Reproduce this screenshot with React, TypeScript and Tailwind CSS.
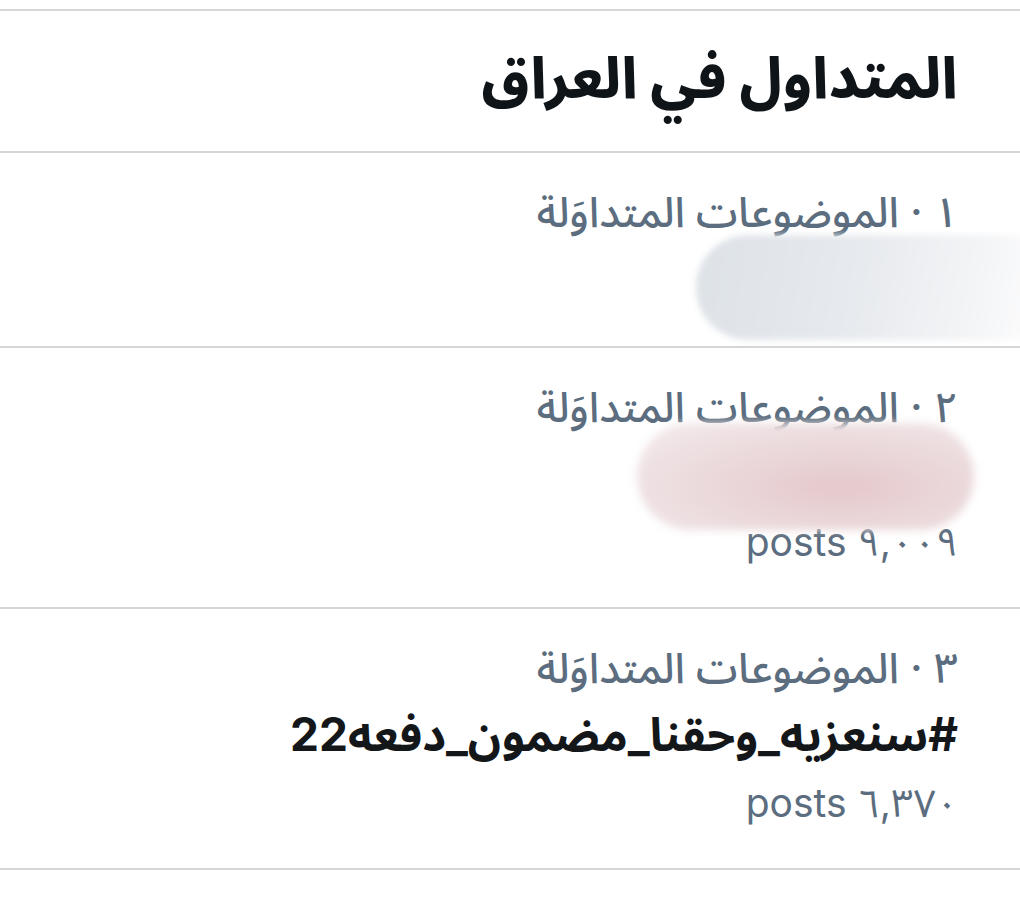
const fontStack = "font-['Inter','Noto_Sans_Arabic','DejaVu_Sans',sans-serif]";

type Trend = {
  rank: string;
  tag?: string;
  posts?: string;
  mask?: "gray" | "pink";
};

const trends: Trend[] = [
  { rank: "١", mask: "gray" },
  { rank: "٢", mask: "pink", posts: "٩,٠٠٩ posts" },
  { rank: "٣", tag: "#سنعزيه_وحقنا_مضمون_دفعه22", posts: "٦,٣٧٠ posts" },
];

// blurred cover over a hidden trend name
function Mask({ kind }: { kind: "gray" | "pink" }) {
  if (kind === "gray") {
    return (
      <div className="absolute -top-[10px] right-[-100px] h-[105px] w-[362px] rounded-[52px] bg-[linear-gradient(100deg,#dde2e7_0%,#e7eaee_45%,#f3f4f6_75%,#ffffff_100%)] blur-[3px]" />
    );
  }
  return (
    <div className="absolute -top-[17px] right-[-16px] h-[107px] w-[337px] rounded-[54px] bg-[radial-gradient(ellipse_at_60%_60%,#e5c8cb_0%,#ecdcde_55%,#f4ecee_100%)] blur-[4px]" />
  );
}

function TrendRow({ trend }: { trend: Trend }) {
  return (
    <div className="border-b-2 border-[#d6d6d6] pt-[26px] pb-[35px] pr-[62px] pl-4">
      <div className="h-[66px] leading-[66px] text-[42px] font-medium text-[#5b6d7e]">
        {trend.rank} · الموضوعات المتداوَلة
      </div>
      <div className="relative h-[66px] leading-[66px] text-[46px] font-bold text-[#14171a]">
        {trend.tag}
        {trend.mask && <Mask kind={trend.mask} />}
      </div>
      {trend.posts && (
        <div className="h-[66px] pt-[3px] leading-[66px] text-[39px] text-[#5b6d7e]">
          {trend.posts}
        </div>
      )}
    </div>
  );
}

export default function App() {
  return (
    <div dir="rtl" className={`min-h-[912px] overflow-hidden bg-white pt-[9px] ${fontStack}`}>
      <div className="border-t-2 border-[#d6d6d6]" />
      {/* Header */}
      <div className="flex h-[142px] items-center border-b-2 border-[#d6d6d6] pb-[6px] pr-[62px] pl-4">
        <h1 className="text-[57px] font-extrabold text-[#0f1419]">المتداول في العراق</h1>
      </div>

      {trends.map((t) => (
        <TrendRow key={t.rank} trend={t} />
      ))}
    </div>
  );
}
